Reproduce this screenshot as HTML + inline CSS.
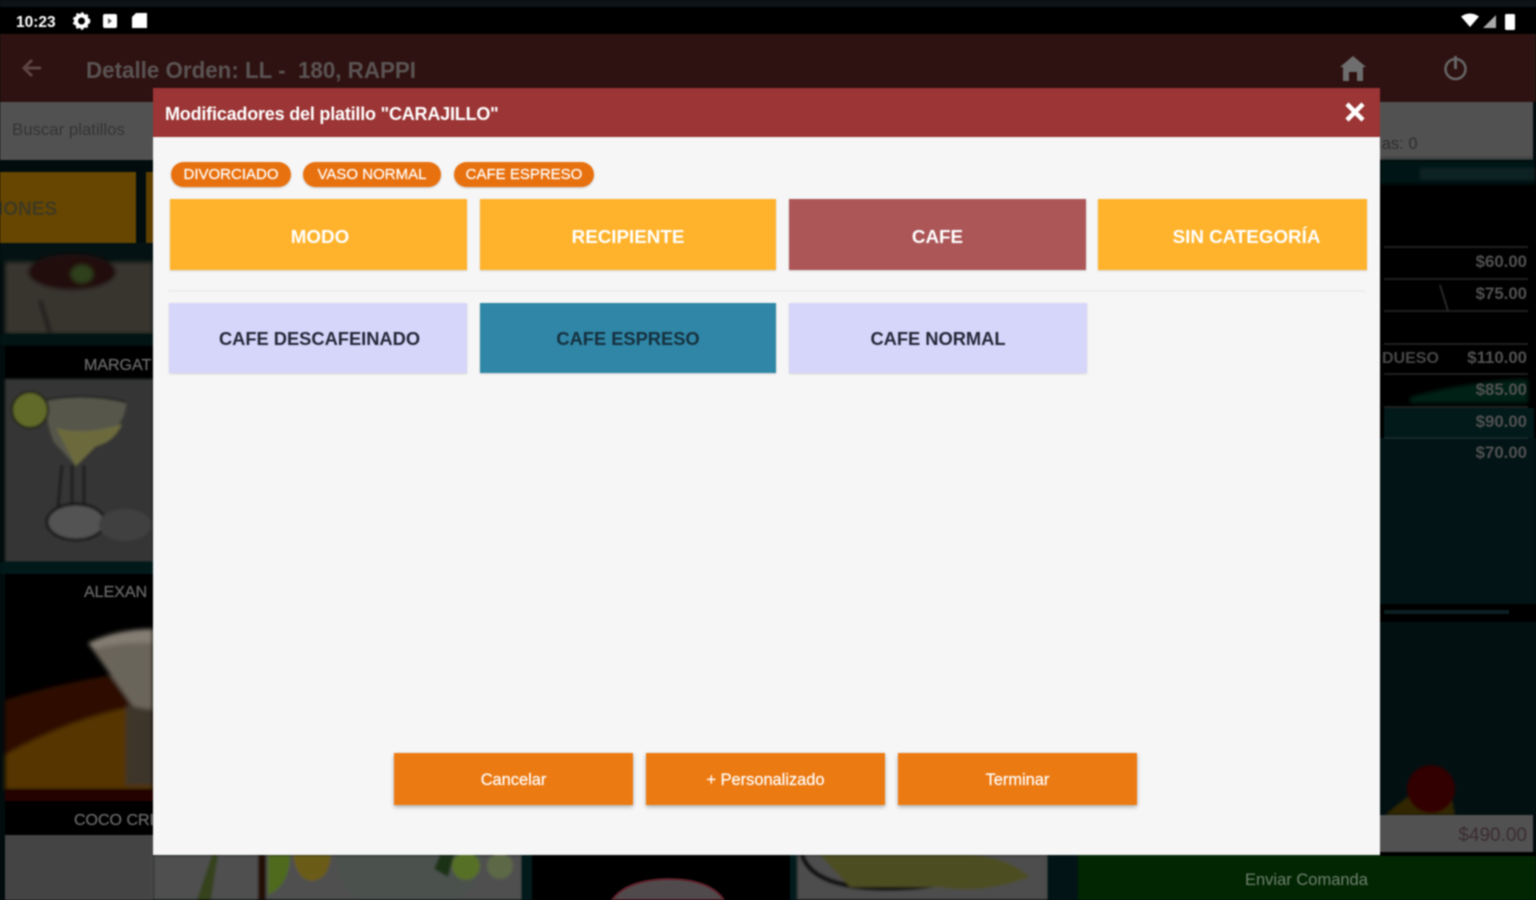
<!DOCTYPE html>
<html lang="es">
<head>
<meta charset="utf-8">
<title>Modificadores</title>
<style>
html,body{margin:0;padding:0;width:1536px;height:900px;overflow:hidden;background:#020c0d}
#wrap{position:relative;width:1536px;height:900px;overflow:hidden;filter:blur(.7px);font-family:"Liberation Sans",sans-serif}
#bg{position:absolute;left:0;top:0;display:block}
.a{position:absolute;box-sizing:border-box;white-space:nowrap}
.c{display:flex;align-items:center;justify-content:center}
#modal{left:153px;top:88px;width:1227px;height:767px;background:#f6f6f6}
#head{left:153px;top:88px;width:1227px;height:49px;background:#9c3535}
.chip{top:162px;height:25px;border-radius:13px;background:#e8710f;color:#fff;font-size:15px;-webkit-text-stroke:.2px #fff;box-shadow:0 1px 2px rgba(0,0,0,.2)}
.cat{top:199px;height:71px;background:#ffb32c;color:#fff;font-size:18.8px;font-weight:bold;padding-top:5px;box-shadow:0 1px 2px rgba(0,0,0,.15)}
.opt{top:303px;height:70px;background:#d6d6fb;color:#232838;font-size:18.3px;font-weight:bold;padding-top:2px;box-shadow:0 1px 2px rgba(0,0,0,.15)}
.act{top:753px;height:52px;width:239px;background:#ec7a12;color:#fff;font-size:16.4px;-webkit-text-stroke:.2px #fff;padding-top:2px;box-shadow:0 2px 4px rgba(0,0,0,.3)}
</style>
</head>
<body>
<div id="wrap">
<svg id="bg" width="1536" height="900" viewBox="0 0 1536 900" xmlns="http://www.w3.org/2000/svg" font-family="Liberation Sans, sans-serif">
  <defs>
    <filter id="b" x="-5%" y="-5%" width="110%" height="110%"><feGaussianBlur stdDeviation="2"/></filter>
    <filter id="n" x="-5%" y="-5%" width="110%" height="110%"><feGaussianBlur stdDeviation="1.200"/></filter>
  </defs>
  <rect width="1536" height="900" fill="#020c0d"/>
  <rect width="1536" height="7" fill="#0e1316"/>
  <rect y="7" width="1536" height="27" fill="#000"/>
  <!-- status bar -->
  <text x="16" y="27" font-size="15.5" font-weight="bold" fill="#fff">10:23</text>
  <circle cx="81.500" cy="21" r="5.500" fill="none" stroke="#fff" stroke-width="4"/>
  <circle cx="81.500" cy="21" r="8" fill="none" stroke="#fff" stroke-width="1.500" stroke-dasharray="2.500 2.800"/>
  <rect x="103" y="14" width="14" height="14" rx="2" fill="#fff"/>
  <path d="M108 18l4 3-4 3z" fill="#555"/>
  <path d="M136 13h11v15h-15v-11z" fill="#fff"/>
  <path d="M1461 16.500q9-6 18 0l-9 10.500z" fill="#fff"/>
  <path d="M1496 15v13h-13z" fill="#aaa"/>
  <rect x="1505" y="14" width="10" height="16" rx="1.500" fill="#fff"/>
  <!-- app bar -->
  <rect y="34" width="1536" height="68" fill="#2e1211"/>
  <path d="M41 68H25m7-8l-8 8 8 8" fill="none" stroke="#5c4443" stroke-width="3"/>
  <text x="86" y="78" font-size="23" font-weight="bold" fill="#5a5353" textLength="330" lengthAdjust="spacingAndGlyphs">Detalle Orden: LL - &#160;180, RAPPI</text>
  <path d="M1353 56l13 11h-3v14h-6v-9h-8v9h-6V67h-3z" fill="#6e6e6e"/>
  <circle cx="1455.500" cy="69" r="10" fill="none" stroke="#666" stroke-width="2.500"/>
  <rect x="1451" y="54" width="9" height="4" fill="#2e1211"/>
  <rect x="1454" y="56" width="3" height="13" fill="#666"/>
  <!-- search row -->
  <rect y="102" width="1533" height="58" fill="#515151"/>
  <text x="12" y="135" font-size="16.800" fill="#343434">Buscar platillos</text>
  <text x="1368" y="149" font-size="16.500" fill="#2e2e2e">Mas: 0</text>
  <!-- left tiles -->
  <rect x="0" y="172" width="136" height="71" fill="#664600"/>
  <rect x="146" y="172" width="8" height="71" fill="#5e3f00"/>
  <text x="-2" y="215" font-size="19" font-weight="bold" fill="#403a22">IONES</text>
  <rect x="0" y="243" width="153" height="20" fill="#041213"/>
  <g filter="url(#b)">
    <rect x="5" y="262" width="148" height="72" fill="#38342f"/>
    <ellipse cx="72" cy="272" rx="44" ry="18" fill="#24100a"/>
    <ellipse cx="82" cy="274" rx="11" ry="9" fill="#2f3f1a"/>
    <path d="M40 300l10 33" stroke="#0e0e0e" stroke-width="3"/>
  </g>
  <rect x="0" y="334" width="153" height="11" fill="#021514"/>
  <rect x="5" y="346" width="148" height="33" fill="#000"/>
  <text x="84" y="370" font-size="16" fill="#666" stroke="#666" stroke-width=".3">MARGAT</text>
  <g filter="url(#n)">
    <rect x="5" y="379" width="148" height="183" fill="#363636"/>
    <path d="M46 400q38-8 80 2q0 24-30 42l-20 22-22-24q-8-18-8-42z" fill="#57574b"/>
    <path d="M46 400q38-8 80 2" fill="none" stroke="#1c1c1c" stroke-width="2"/>
    <path d="M56 428q30 8 66-4-8 18-26 22l-20 20z" fill="#6c6a3c"/>
    <circle cx="30" cy="410" r="18" fill="#626a2b" stroke="#15180a" stroke-width="2"/>
    <path d="M62 465l-4 42M72 465v45M84 465v45" stroke="#161616" stroke-width="2.500"/>
    <ellipse cx="76" cy="522" rx="29" ry="18" fill="#525252" stroke="#141414" stroke-width="3"/>
    <ellipse cx="125" cy="525" rx="26" ry="16" fill="#404040"/>
  </g>
  <rect x="0" y="562" width="153" height="12" fill="#02191a"/>
  <rect x="5" y="574" width="148" height="216" fill="#000"/>
  <text x="84" y="597" font-size="16" fill="#666" stroke="#666" stroke-width=".3">ALEXAN</text>
  <g filter="url(#b)">
    <path d="M5 700q70-22 148-30v120H5z" fill="#2e1002"/>
    <path d="M5 755q70-40 148-52v87H5z" fill="#573606"/>
    <path d="M88 643q30-14 65-14v80h-18z" fill="#6a655a"/>
    <path d="M88 643q30-14 65-14v14q-30-2-58 6z" fill="#837d72"/>
    <path d="M126 705l27 5v75h-27z" fill="#3e3529"/>
  </g>
  <rect x="5" y="790" width="148" height="11" fill="#250202"/>
  <rect x="5" y="801" width="148" height="34" fill="#000"/>
  <text x="74" y="825" font-size="16" fill="#666" stroke="#666" stroke-width=".3">COCO CRI</text>
  <rect x="5" y="835" width="148" height="65" fill="#444"/>
  <!-- bottom images -->
  <g filter="url(#n)">
    <rect x="153" y="855" width="369" height="45" fill="#4f4f4f"/>
    <path d="M197 900l15-45h6l-7 45z" fill="#36431a"/>
    <rect x="258" y="855" width="8" height="45" fill="#220c06"/>
    <path d="M268 855h22q0 30-22 40z" fill="#4f6a1e"/>
    <path d="M293 855h38q-2 24-18 26-16 0-20-26z" fill="#6a5c12"/>
    <path d="M335 855q2 32 25 45h100q18-15 22-45z" fill="#4b514e"/>
    <path d="M440 855l-6 14 14 8 6-22z" fill="#1c3312"/>
    <circle cx="466" cy="866" r="14" fill="#566f28"/>
    <circle cx="500" cy="866" r="13" fill="#5d6746"/>
  </g>
  <rect x="522" y="855" width="10" height="45" fill="#021a1c"/>
  <rect x="532" y="855" width="258" height="45" fill="#000"/>
  <path d="M612 900q14-20 56-21 42 0 56 21z" fill="#514a4c" stroke="#5e2029" stroke-width="2"/>
  <rect x="790" y="855" width="7" height="45" fill="#021a1c"/>
  <g filter="url(#n)">
    <rect x="797" y="855" width="251" height="45" fill="#4d4d4d"/>
    <path d="M802 855q10 30 70 33 60 2 80-10" fill="none" stroke="#0c0c0c" stroke-width="5"/>
    <path d="M820 855h145q40 0 65 22-50 18-90 10h-90z" fill="#4e4e22"/>
  </g>
  <rect x="1048" y="855" width="30" height="45" fill="#021415"/>
  <rect x="1078" y="855" width="458" height="45" fill="#022602"/>
  <text x="1245" y="885" font-size="16.500" fill="#6f806f">Enviar Comanda</text>
  <!-- right panel -->
  <rect x="1380" y="160" width="156" height="320" fill="#000"/>
  <g filter="url(#b)">
    <rect x="1380" y="160" width="156" height="24" fill="#051517"/>
    <rect x="1420" y="168" width="116" height="12" fill="#0a2123"/>
    <path d="M1410 397q60-16 118-18v24h-118z" fill="#022018"/>
  </g>
  <path d="M1384 247h144M1384 279h144M1384 311h144M1384 344h144M1384 374h144M1384 407h144" stroke="#1f1f1f" stroke-width="2"/>
  <path d="M1440 285l8 26" stroke="#282828" stroke-width="2"/>
  <rect x="1384" y="408" width="150" height="30" fill="#031a1a"/>
  <rect x="1380" y="438" width="156" height="170" fill="#021415"/>
  <path d="M1384 438h144" stroke="#14292a" stroke-width="2"/>
  <g font-size="16.800" font-weight="bold" fill="#505050" text-anchor="end">
    <text x="1527" y="267">$60.00</text>
    <text x="1527" y="299">$75.00</text>
    <text x="1527" y="363">$110.00</text>
    <text x="1527" y="395">$85.00</text>
    <text x="1527" y="427">$90.00</text>
    <text x="1527" y="458">$70.00</text>
  </g>
  <text x="1382" y="363" font-size="16" font-weight="bold" fill="#464646">DUESO</text>
  <rect x="1380" y="604" width="156" height="18" fill="#000"/>
  <rect x="1384" y="610" width="125" height="4" fill="#0b2122"/>
  <rect x="1380" y="622" width="156" height="193" fill="#021012"/>
  <g filter="url(#n)">
    <path d="M1385 815q30-26 62-42l8 42z" fill="#332804"/>
    <circle cx="1431" cy="789" r="24" fill="#300601"/>
  </g>
  <rect x="1380" y="815" width="153" height="37" fill="#515151"/>
  <text x="1527" y="841" font-size="19" text-anchor="end" fill="#3b2c30">$490.00</text>
  <rect x="1380" y="852" width="156" height="4" fill="#000"/>
</svg>

<div class="a" id="modal"></div>
<div class="a" id="head"></div>
<div class="a" style="left:165px;top:103px;color:#fff;font-size:18px;line-height:22px;font-weight:bold;letter-spacing:-.2px">Modificadores del platillo "CARAJILLO"</div>
<svg class="a" style="left:1344px;top:101px" width="22" height="22" viewBox="0 0 22 22"><path d="M3 3l16 16M19 3L3 19" stroke="#fff" stroke-width="4.500"/></svg>

<div class="a c chip" style="left:171px;width:120px">DIVORCIADO</div>
<div class="a c chip" style="left:303px;width:138px">VASO NORMAL</div>
<div class="a c chip" style="left:454px;width:140px">CAFE ESPRESO</div>

<div class="a c cat" style="left:170px;width:297px;padding-left:3px">MODO</div>
<div class="a c cat" style="left:480px;width:296px">RECIPIENTE</div>
<div class="a c cat" style="left:789px;width:297px;background:#ac5658">CAFE</div>
<div class="a c cat" style="left:1098px;width:269px;padding-left:28px">SIN CATEGORÍA</div>

<div class="a" style="left:168px;top:290px;width:1197px;height:2px;background:#ececec"></div>

<div class="a c opt" style="left:169px;width:298px;padding-left:3px">CAFE DESCAFEINADO</div>
<div class="a c opt" style="left:480px;width:296px;background:#2f86a6;color:#16303f">CAFE ESPRESO</div>
<div class="a c opt" style="left:789px;width:298px">CAFE NORMAL</div>

<div class="a c act" style="left:394px">Cancelar</div>
<div class="a c act" style="left:646px">+ Personalizado</div>
<div class="a c act" style="left:898px">Terminar</div>
</div>
</body>
</html>
